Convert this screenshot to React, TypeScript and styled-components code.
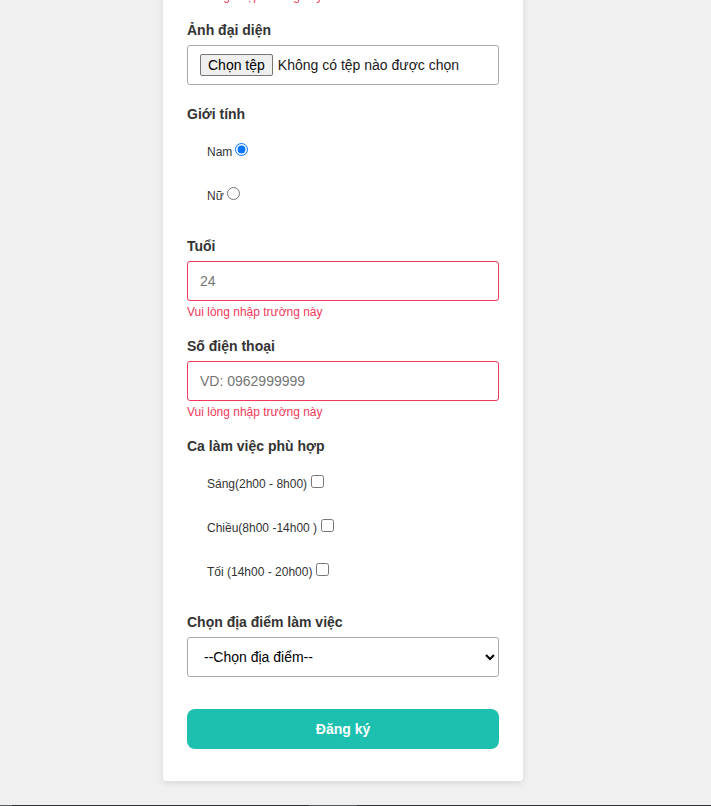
import React from "react";
import styled, { createGlobalStyle } from "styled-components";

const GlobalStyle = createGlobalStyle`
  html, body {
    margin: 0;
    padding: 0;
    height: 806px;
    overflow: hidden;
    background: #f0f0f0;
    font-family: "Liberation Sans", Arial, sans-serif;
  }
  * { box-sizing: border-box; }
`;

const Page = styled.div`
  display: flex;
  flex-direction: column;
  align-items: flex-start;
`;

const Card = styled.form`
  width: 360px;
  margin: -35px 0 0 163px;
  padding: 24px 24px 32px;
  background: #fff;
  border-radius: 4px;
  box-shadow: 0 2px 6px rgba(0, 0, 0, 0.1);
  display: flex;
  flex-direction: column;
`;

const Group = styled.div<{ $after?: number }>`
  display: flex;
  flex-direction: column;
  margin-bottom: ${(p) => p.$after ?? 19}px;
`;

const Label = styled.label`
  font-size: 14px;
  line-height: 16px;
  font-weight: 700;
  color: #333;
  margin-bottom: 7px;
`;

const ErrorText = styled.div<{ $top?: number; $bottom?: number }>`
  font-size: 12px;
  line-height: 14px;
  color: #f2385a;
  margin-top: ${(p) => p.$top ?? 4}px;
  margin-bottom: ${(p) => p.$bottom ?? 0}px;
`;

const TextInput = styled.input<{ $invalid?: boolean }>`
  height: 40px;
  width: 100%;
  padding: 0 12px;
  font-size: 14px;
  font-family: "Liberation Sans", Arial, sans-serif;
  color: #222;
  border: 1px solid ${(p) => (p.$invalid ? "#f2385a" : "#aaa")};
  border-radius: 3px;
  outline: none;
  &::placeholder { color: #757575; }
`;

const FileBox = styled.label`
  height: 40px;
  display: flex;
  align-items: center;
  padding: 0 12px;
  border: 1px solid #aaa;
  border-radius: 3px;
  font-size: 14px;
  color: #1a1a1a;
  cursor: pointer;
  input { display: none; }
`;

const FileButton = styled.span`
  display: inline-block;
  height: 22px;
  line-height: 20px;
  padding: 0 7px;
  margin-right: 5px;
  background: #efefef;
  border: 1px solid #767676;
  border-radius: 2px;
  color: #000;
`;

const Options = styled.div<{ $gap: number; $top: number }>`
  display: flex;
  flex-direction: column;
  gap: ${(p) => p.$gap}px;
  padding: ${(p) => p.$top}px 0 0 20px;
`;

const Option = styled.label`
  display: block;
  font-size: 12px;
  line-height: 14px;
  color: #333;
  input { vertical-align: baseline; }
  input[type="radio"] { margin-left: 3px; }
`;

const Select = styled.select`
  height: 40px;
  width: 100%;
  padding: 0 8px 0 12px;
  font-size: 14px;
  font-family: "Liberation Sans", Arial, sans-serif;
  color: #000;
  background: #fff;
  border: 1px solid #aaa;
  border-radius: 3px;
  outline: none;
`;

const Submit = styled.button`
  height: 40px;
  width: 100%;
  margin-top: 13px;
  border: none;
  border-radius: 8px;
  background: #1dbfaf;
  color: #fff;
  font-size: 14px;
  font-weight: 700;
  font-family: "Liberation Sans", Arial, sans-serif;
  cursor: pointer;
`;

const Taskbar = styled.div`
  margin-top: 24px;
  width: 100%;
  height: 1px;
  display: flex;
  background: #2c3034;
`;

const TaskSeg = styled.span<{ $w: number; $c: string }>`
  width: ${(p) => p.$w}px;
  height: 1px;
  background: ${(p) => p.$c};
`;

export default function App() {
  return (
    <>
      <GlobalStyle />
      <Page>
        <Card onSubmit={(e) => e.preventDefault()}>
          <ErrorText $top={0} $bottom={19}>
            Vui lòng nhập trường này
          </ErrorText>

          <Group $after={21}>
            <Label>Ảnh đại diện</Label>
            <FileBox>
              <input type="file" />
              <FileButton>Chọn tệp</FileButton>
              Không có tệp nào được chọn
            </FileBox>
          </Group>

          <Group $after={35}>
            <Label>Giới tính</Label>
            <Options $gap={25} $top={11}>
              <Option>
                Nam
                <input type="radio" name="gender" defaultChecked />
              </Option>
              <Option>
                Nữ
                <input type="radio" name="gender" />
              </Option>
            </Options>
          </Group>

          <Group>
            <Label>Tuổi</Label>
            <TextInput $invalid placeholder="24" />
            <ErrorText>Vui lòng nhập trường này</ErrorText>
          </Group>

          <Group>
            <Label>Số điện thoại</Label>
            <TextInput $invalid placeholder="VD: 0962999999" />
            <ErrorText>Vui lòng nhập trường này</ErrorText>
          </Group>

          <Group $after={35}>
            <Label>Ca làm việc phù hợp</Label>
            <Options $gap={25} $top={11}>
              <Option>
                Sáng(2h00 - 8h00)
                <input type="checkbox" />
              </Option>
              <Option>
                Chiều(8h00 -14h00 )
                <input type="checkbox" />
              </Option>
              <Option>
                Tối (14h00 - 20h00)
                <input type="checkbox" />
              </Option>
            </Options>
          </Group>

          <Group>
            <Label>Chọn địa điểm làm việc</Label>
            <Select defaultValue="">
              <option value="">--Chọn địa điểm--</option>
              <option value="hn">Hà Nội</option>
              <option value="hcm">Hồ Chí Minh</option>
            </Select>
          </Group>

          <Submit type="submit">Đăng ký</Submit>
        </Card>
        <Taskbar>
          <TaskSeg $w={12} $c="#5a5d60" />
          <TaskSeg $w={297} $c="#2c3034" />
          <TaskSeg $w={48} $c="#55585b" />
        </Taskbar>
      </Page>
    </>
  );
}
